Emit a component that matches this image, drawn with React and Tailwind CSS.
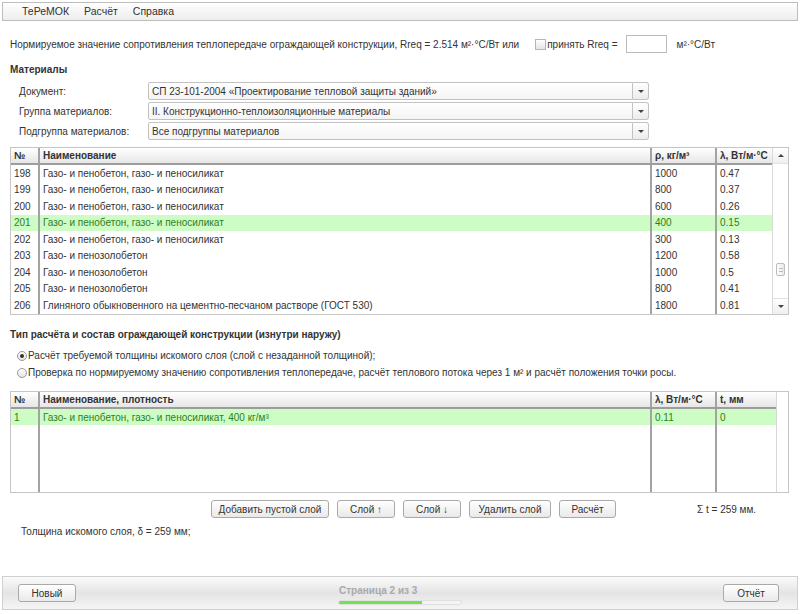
import React from 'react'

const font = { fontFamily: '"Liberation Sans", Arial, sans-serif' }

const materials = [
  ['198', 'Газо- и пенобетон, газо- и пеносиликат', '1000', '0.47'],
  ['199', 'Газо- и пенобетон, газо- и пеносиликат', '800', '0.37'],
  ['200', 'Газо- и пенобетон, газо- и пеносиликат', '600', '0.26'],
  ['201', 'Газо- и пенобетон, газо- и пеносиликат', '400', '0.15'],
  ['202', 'Газо- и пенобетон, газо- и пеносиликат', '300', '0.13'],
  ['203', 'Газо- и пенозолобетон', '1200', '0.58'],
  ['204', 'Газо- и пенозолобетон', '1000', '0.5'],
  ['205', 'Газо- и пенозолобетон', '800', '0.41'],
  ['206', 'Глиняного обыкновенного на цементно-песчаном растворе (ГОСТ 530)', '1800', '0.81'],
]

function Select({ label, value }) {
  return (
    <div className="flex h-[18px] items-center">
      <div className="w-[138px] pl-[9px]">{label}</div>
      <div className="flex h-[18px] w-[485px] items-center rounded-l-[2px] border border-[#c2c2c2] bg-gradient-to-b from-white to-[#f4f4f4] px-[3px]">
        {value}
      </div>
      <div className="flex h-[18px] w-[16px] items-center justify-center rounded-r-[3px] border border-l-0 border-[#c2c2c2] bg-gradient-to-b from-white to-[#ececec]">
        <span className="block h-0 w-0 border-x-[3px] border-t-[3px] border-x-transparent border-t-[#444]" />
      </div>
    </div>
  )
}

function Btn({ children, w }) {
  return (
    <button
      className={`flex h-[18px] items-center justify-center rounded-[3px] border border-[#a9a9a9] bg-gradient-to-b from-white to-[#e9e9e9] text-[10px] leading-[13px] text-[#333] ${w}`}
      style={font}
    >
      {children}
    </button>
  )
}

const cellSep = 'border-l-2 border-[#a3a3a3]'

function HeadCell({ w, children, sep }) {
  return (
    <div className={`flex items-center whitespace-nowrap px-[3px] font-bold ${w} ${sep ? cellSep : ''}`}>{children}</div>
  )
}

function Cell({ w, children, sep }) {
  return <div className={`flex items-center whitespace-nowrap px-[3px] ${w} ${sep ? cellSep : ''}`}>{children}</div>
}

function MaterialsTable() {
  return (
    <div className="mx-[10px] mt-[7px] flex h-[168px] w-[779px] border border-[#c6c6c6]">
      <div className="flex flex-1 flex-col">
        <div className="flex h-[17px] border-b-2 border-[#9d9d9d] bg-gradient-to-b from-white to-[#e6e6e6]">
          <HeadCell w="w-[27px]">№</HeadCell>
          <HeadCell w="w-[612px]" sep>Наименование</HeadCell>
          <HeadCell w="w-[65px]" sep>ρ, кг/м³</HeadCell>
          <HeadCell w="flex-1" sep>λ, Вт/м·°С</HeadCell>
        </div>
        {materials.map(r => {
          const hl = r[0] === '201'
          return (
            <div
              key={r[0]}
              className={`flex h-[16.5px] ${hl ? 'bg-[#cdfcc5] text-[#2f7f22]' : ''}`}
            >
              <Cell w="w-[27px]">{r[0]}</Cell>
              <Cell w="w-[612px]" sep>{r[1]}</Cell>
              <Cell w="w-[65px]" sep>{r[2]}</Cell>
              <Cell w="flex-1" sep>{r[3]}</Cell>
            </div>
          )
        })}
      </div>
      <div className="flex w-[16px] flex-col border-l border-[#dadada] bg-white">
        <div className="flex h-[16px] items-center justify-center border-b border-[#e2e2e2] bg-gradient-to-b from-white to-[#efefef]">
          <span className="block h-0 w-0 border-x-[3px] border-b-[3px] border-x-transparent border-b-[#444]" />
        </div>
        <div className="relative flex-1">
          <div className="absolute left-[3px] top-[99px] flex h-[13px] w-[9px] flex-col items-center justify-center gap-[2px] rounded-[2px] border border-[#bcbcbc] bg-gradient-to-r from-white to-[#e8e8e8]">
            <span className="block h-px w-[4px] bg-[#bbb]" />
            <span className="block h-px w-[4px] bg-[#bbb]" />
          </div>
        </div>
        <div className="flex h-[16px] items-center justify-center border-t border-[#e2e2e2] bg-gradient-to-b from-white to-[#efefef]">
          <span className="block h-0 w-0 border-x-[3px] border-t-[3px] border-x-transparent border-t-[#444]" />
        </div>
      </div>
    </div>
  )
}

function LayersTable() {
  return (
    <div className="mx-[10px] mt-[10px] flex h-[102px] w-[779px] border border-[#c6c6c6]">
      <div className="flex w-[765px] flex-col">
        <div className="flex h-[17px] shrink-0 border-b-2 border-[#9d9d9d] bg-gradient-to-b from-white to-[#e6e6e6]">
          <HeadCell w="w-[27px]">№</HeadCell>
          <HeadCell w="w-[612px]" sep>Наименование, плотность</HeadCell>
          <HeadCell w="w-[65px]" sep>λ, Вт/м·°С</HeadCell>
          <HeadCell w="flex-1" sep>t, мм</HeadCell>
        </div>
        <div className="flex h-[16px] shrink-0 bg-[#cdfcc5] text-[#2f7f22]">
          <Cell w="w-[27px]">1</Cell>
          <Cell w="w-[612px]" sep>Газо- и пенобетон, газо- и пеносиликат, 400 кг/м³</Cell>
          <Cell w="w-[65px]" sep>0.11</Cell>
          <Cell w="flex-1" sep>0</Cell>
        </div>
        <div className="flex flex-1">
          <Cell w="w-[27px]" />
          <Cell w="w-[612px]" sep />
          <Cell w="w-[65px]" sep />
          <Cell w="flex-1" sep />
        </div>
      </div>
      <div className="flex-1 border-l border-[#d6d6d6]" />
    </div>
  )
}

export default function App() {
  return (
    <div className="relative flex h-[614px] w-[800px] flex-col bg-white text-[10px] leading-[13px] text-[#333]" style={font}>
      <div className="mx-[2px] mt-[2px] flex h-[19px] items-center gap-[15px] border border-[#bdbdbd] bg-gradient-to-b from-white to-[#ededed] pl-[19px] text-[10.5px]">
        <span>ТеРеМОК</span>
        <span>Расчёт</span>
        <span>Справка</span>
      </div>

      <div className="mt-[14px] flex h-[18px] items-center pl-[10px]">
        <span>Нормируемое значение сопротивления теплопередаче ограждающей конструкции, Rreq = 2.514 м²·°С/Вт или</span>
        <span className="ml-[16px] block h-[11px] w-[11px] border border-[#b5b5b5] bg-gradient-to-b from-white to-[#e4e4e4]" />
        <span className="ml-px">принять Rreq =</span>
        <span className="ml-[8px] block h-[18px] w-[41px] border border-[#bcbcbc] bg-white" />
        <span className="ml-[10px]">м²·°С/Вт</span>
      </div>

      <div className="mt-[10px] pl-[10px] font-bold">Материалы</div>

      <div className="mt-[6px] flex flex-col gap-[2px] pl-[10px]">
        <Select label="Документ:" value="СП 23-101-2004 «Проектирование тепловой защиты зданий»" />
        <Select label="Группа материалов:" value="II. Конструкционно-теплоизоляционные материалы" />
        <Select label="Подгруппа материалов:" value="Все подгруппы материалов" />
      </div>

      <MaterialsTable />

      <div className="mt-[13px] pl-[10px] font-bold">Тип расчёта и состав ограждающей конструкции (изнутри наружу)</div>

      <div className="mt-[6px] flex flex-col pl-[17px]">
        <div className="flex h-[17px] items-center">
          <span className="flex h-[10px] w-[10px] items-center justify-center rounded-full border border-[#9a9a9a] bg-gradient-to-b from-white to-[#e6e6e6]">
            <span className="block h-[4px] w-[4px] rounded-full bg-[#333]" />
          </span>
          <span className="ml-px">Расчёт требуемой толщины искомого слоя (слой с незаданной толщиной);</span>
        </div>
        <div className="flex h-[17px] items-center">
          <span className="block h-[10px] w-[10px] rounded-full border border-[#9a9a9a] bg-gradient-to-b from-white to-[#e6e6e6]" />
          <span className="ml-px">Проверка по нормируемому значению сопротивления теплопередаче, расчёт теплового потока через 1 м² и расчёт положения точки росы.</span>
        </div>
      </div>

      <LayersTable />

      <div className="mt-[7px] flex h-[18px] items-center pl-[211px]">
        <div className="flex gap-[8px]">
          <Btn w="w-[118px]">Добавить пустой слой</Btn>
          <Btn w="w-[58px]">Слой ↑</Btn>
          <Btn w="w-[58px]">Слой ↓</Btn>
          <Btn w="w-[82px]">Удалить слой</Btn>
          <Btn w="w-[57px]">Расчёт</Btn>
        </div>
        <span className="ml-[81px]">Σ t = 259 мм.</span>
      </div>

      <div className="mt-[7px] pl-[21px]">Толщина искомого слоя, δ = 259 мм;</div>

      <div className="mx-[2px] mb-[4px] mt-auto flex h-[34px] items-center border border-[#d0d0d0] bg-gradient-to-b from-[#fbfbfb] via-[#e4e4e4] to-[#f5f5f5] pl-[15px] pr-[18px]">
        <Btn w="w-[58px]">Новый</Btn>
        <div className="ml-[263px] flex flex-col pt-[2px]">
          <span className="font-bold text-[#a9a9a9]">Страница 2 из 3</span>
          <div className="mt-[4px] flex h-[3px] w-[122px] overflow-hidden rounded-full bg-[#f4f4f4] shadow-[0_0_0_1px_#e0e0e0]">
            <div className="h-full bg-[#74e14f]" style={{ width: '68%' }} />
          </div>
        </div>
        <div className="ml-auto">
          <Btn w="w-[56px]">Отчёт</Btn>
        </div>
      </div>
    </div>
  )
}
